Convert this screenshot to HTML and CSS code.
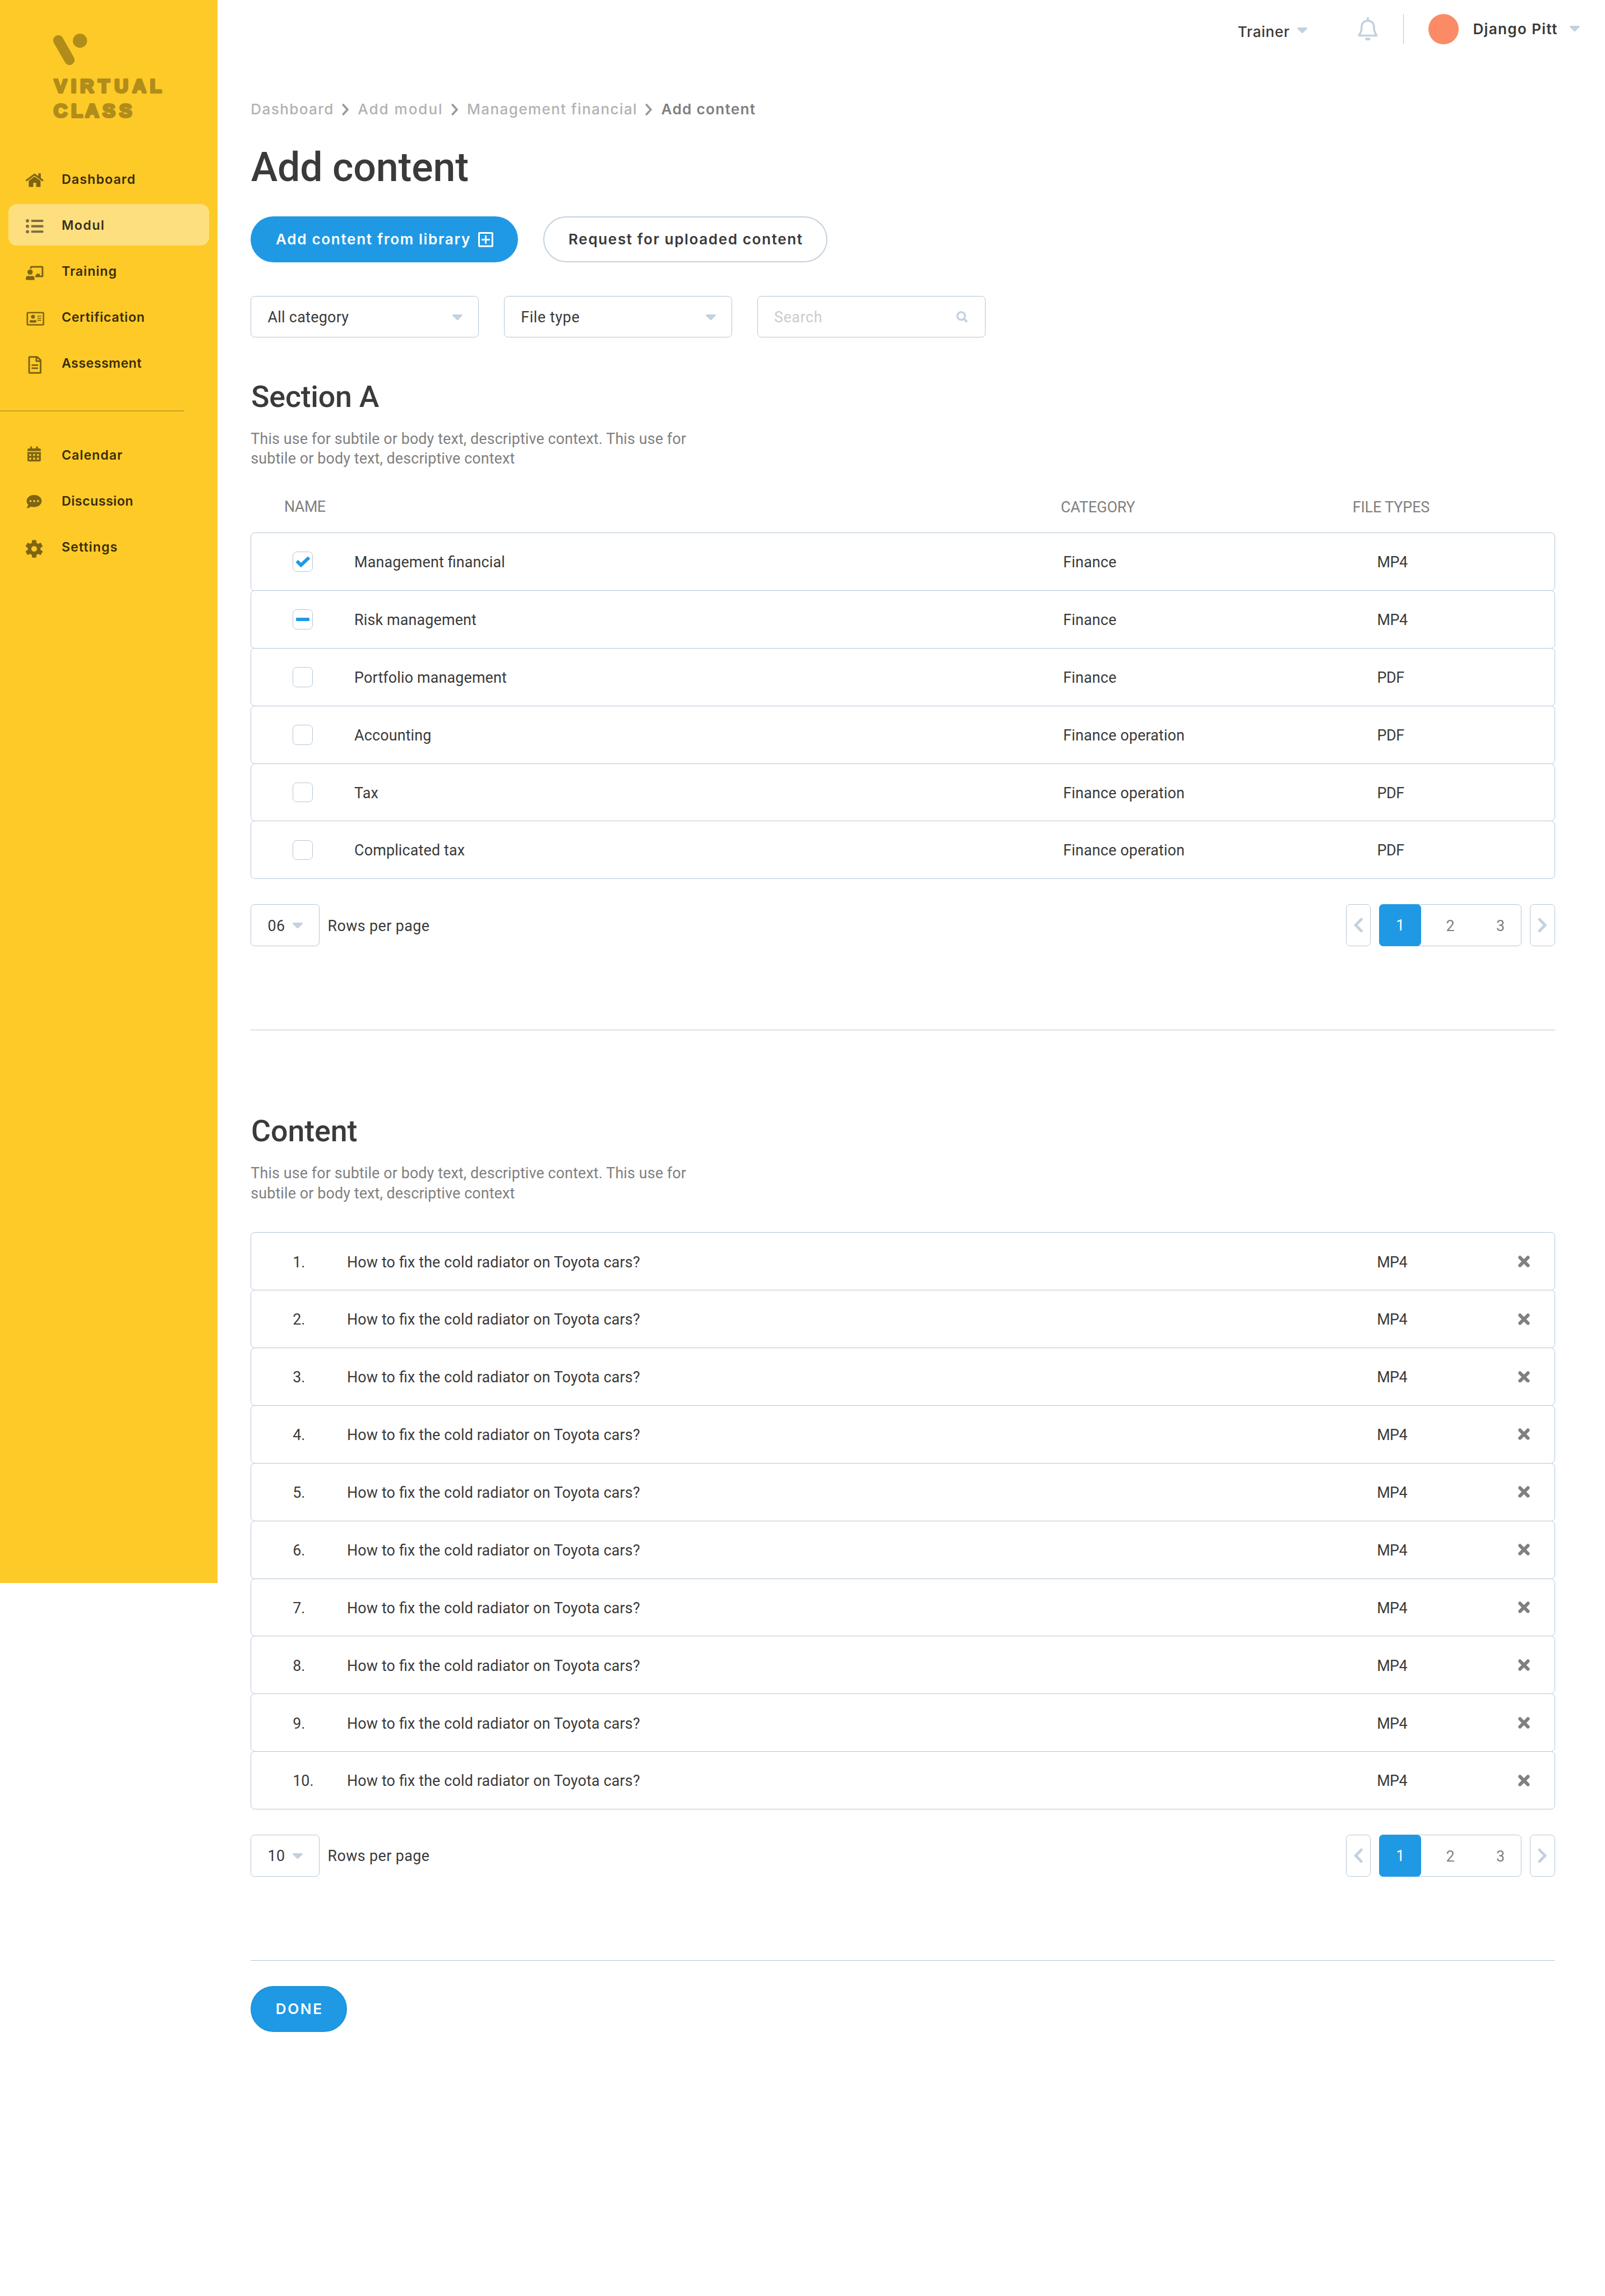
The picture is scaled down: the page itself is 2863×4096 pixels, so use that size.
FILE: index.html
```html
<!DOCTYPE html>
<html lang="en">
<head>
<meta charset="utf-8">
<title>Add content – Virtual Class</title>
<link rel="stylesheet" href="styles.css">
</head>
<body>
<svg class="sprite" aria-hidden="true">
  <symbol id="caret" viewBox="0 0 24 14"><path d="M2 0H22C24 0 24.6 2 23.4 3.2L13.4 13.2Q12 14.6 10.6 13.2L.6 3.2C-.6 2 0 0 2 0Z" fill="currentColor"/></symbol>
  <symbol id="chev-right" viewBox="0 0 22 36"><path d="M4.2 4.2L17.6 18L4.2 31.8" fill="none" stroke="currentColor" stroke-width="6.6" stroke-linecap="round"/></symbol>
  <symbol id="chev-left" viewBox="0 0 22 36"><path d="M17.8 4.2L4.4 18L17.8 31.8" fill="none" stroke="currentColor" stroke-width="6.6" stroke-linecap="round"/></symbol>
  <symbol id="crumb-sep" viewBox="0 0 17 28"><path d="M3 2.6L13.4 14L3 25.4" fill="none" stroke="currentColor" stroke-width="4.8" stroke-linecap="round"/></symbol>
  <symbol id="cross" viewBox="0 0 28 28"><path d="M4.4 4.4L23.6 23.6M23.6 4.4L4.4 23.6" fill="none" stroke="currentColor" stroke-width="8" stroke-linecap="round"/></symbol>
</svg>

<div class="app">
  <aside class="sidebar">
    <svg class="logo" viewBox="120 76 280 214">
      <path d="M140 96L167 143" stroke="currentColor" stroke-width="24.5" stroke-linecap="round"/>
      <circle cx="192" cy="97" r="17" fill="currentColor"/>
      <text class="wordmark" y="221.500" x="130.500 170.500 192.500 235.500 274.500 317.500 359.500">VIRTUAL</text>
      <text class="wordmark" y="280" x="129 171 204.500 246 286">CLASS</text>
    </svg>
    <nav class="nav">
      <a class="nav-item dashboard"><svg viewBox="0 0 44 44"><path d="M1.8 25.2L21 11L40.2 25.2" fill="none" stroke="currentColor" stroke-width="4" stroke-linejoin="round" stroke-linecap="round"/><path d="M30 10q0-1.5 1.5-1.5h3q1.5 0 1.5 1.5V21L30 16.5Z"/><path d="M7 26L21 16L35.3 26V39.5q0 1.4-1.4 1.4H26q-1.2 0-1.2-1.2V32q0-1-1-1H19q-1 0-1 1v7.7q0 1.2-1.2 1.2H8.4Q7 40.900 7 39.500Z"/></svg><span>Dashboard</span></a>
      <a class="nav-item modul active"><svg viewBox="0 0 44 44"><circle cx="4" cy="12" r="3.9"/><circle cx="4" cy="25" r="3.9"/><circle cx="4" cy="38" r="3.9"/><rect x="13" y="9.300" width="29" height="5.400" rx="1.200"/><rect x="13" y="22.300" width="29" height="5.400" rx="1.200"/><rect x="13" y="35.300" width="29" height="5.400" rx="1.200"/></svg><span>Modul</span></a>
      <a class="nav-item training"><svg viewBox="0 0 44 44"><path d="M12.300 16.500V13.500Q12.300 12 13.800 12H38.500Q40 12 40 13.500V33.500Q40 35 38.500 35H22.500" fill="none" stroke="currentColor" stroke-width="4"/><rect x="25" y="28.800" width="8.700" height="5"/><circle cx="10.300" cy="24.600" r="6.300"/><path d="M6 33.500Q10.500 35.500 15 33.500Q21 34 21 40.500V41.500Q21 43.600 19 43.600H2Q0 43.600 0 41.500V40.500Q0 34 6 33.500Z"/></svg><span>Training</span></a>
      <a class="nav-item certification"><svg viewBox="0 0 44 44"><rect x="3.700" y="11.700" width="38.600" height="29.200" rx="2" fill="none" stroke="currentColor" stroke-width="3.500"/><circle cx="17.200" cy="21.600" r="4.700"/><path d="M12.500 29.200Q17 31 22 29.200Q25.500 30 25.500 34Q25.500 35.500 24 35.500H10.500Q9 35.500 9 34Q9 30 12.500 29.200Z"/><path d="M27.500 20.200H37M27.500 25.100H37M27.500 30H37" stroke="currentColor" stroke-width="2.100"/></svg><span>Certification</span></a>
      <a class="nav-item assessment"><svg viewBox="0 0 44 44"><path d="M9 7.800H27.500L35.500 15.200V45Q35.500 46 34.500 46H9Q8 46 8 45V8.800Q8 7.800 9 7.800ZM25.300 8V17.700H35.500" fill="none" stroke="currentColor" stroke-width="4" stroke-linejoin="round"/><path d="M14 27.200H29.500M14 34.600H29.500" stroke="currentColor" stroke-width="3.700"/></svg><span>Assessment</span></a>
      <hr class="nav-rule">
      <a class="nav-item calendar"><svg viewBox="0 0 44 44"><path d="M4 13V9.800Q4 6.800 7 6.800H10.700V3Q10.700 2 11.700 2H14Q15 2 15 3V6.800H24.500V3Q24.500 2 25.500 2H28Q29 2 29 3V6.800H33Q36 6.800 36 9.800V13Z"/><path fill-rule="evenodd" d="M4 15.500H36V35Q36 38 33 38H7Q4 38 4 35ZM8.300 20V24.500H12.800V20ZM17.700 20V24.500H22.200V20ZM26.800 20V24.500H31.300V20ZM8.300 29V33.500H12.800V29ZM17.700 29V33.500H22.200V29ZM26.800 29V33.500H31.300V29Z"/></svg><span>Calendar</span></a>
      <a class="nav-item discussion"><svg viewBox="0 0 44 44"><path fill-rule="evenodd" d="M20 8C30 8 38 14.500 38 22.500S30 37 20 37Q16 37 12.500 35.800Q8 39.600 2.600 39.600Q1.500 39.600 2.300 38.600Q5 35.500 5.800 32Q2 28 2 22.500C2 14.500 10 8 20 8ZM11.200 20.200a2.400 2.400 0 1 0 .01 0ZM20.200 20.200a2.400 2.400 0 1 0 .01 0ZM29.200 20.200a2.400 2.400 0 1 0 .01 0Z"/></svg><span>Discussion</span></a>
      <a class="nav-item settings"><svg viewBox="0 0 44 44"><g transform="translate(20 27)"><circle r="11" fill="none" stroke="currentColor" stroke-width="8.600"/><path id="tooth" d="M-5.600 -13L-5.200 -20Q-5 -21 -4 -21H4Q5 -21 5.200 -20L5.600 -13Z"/><use href="#tooth" transform="rotate(60)"/><use href="#tooth" transform="rotate(120)"/><use href="#tooth" transform="rotate(180)"/><use href="#tooth" transform="rotate(240)"/><use href="#tooth" transform="rotate(300)"/></g></svg><span>Settings</span></a>
    </nav>
  </aside>

  <div class="page">
    <header class="topbar">
      <span class="role">Trainer</span>
      <svg class="caret role-caret"><use href="#caret"/></svg>
      <svg class="bell" viewBox="0 0 48 56"><path d="M2.600 43C7.500 37 9.200 32 9.200 24C9.200 13 16 8 24 8S38.800 13 38.800 24C38.800 32 40.500 37 45.400 43Q45.400 43.500 44.500 43.500H3.500Q2.600 43.500 2.600 43Z" fill="none" stroke="currentColor" stroke-width="4.800" stroke-linejoin="round"/><path d="M24 2.500V7" stroke="currentColor" stroke-width="5.500" stroke-linecap="round"/><path d="M17.300 49H30.700Q30.500 56 24 56T17.300 49Z" fill="currentColor"/></svg>
      <span class="bar"></span>
      <span class="avatar"></span>
      <span class="user">Django Pitt</span>
      <svg class="caret user-caret"><use href="#caret"/></svg>
    </header>

    <main class="main">
      <div class="crumbs">
        <span>Dashboard</span><svg><use href="#crumb-sep"/></svg>
        <span class="crumb-modul">Add modul</span><svg><use href="#crumb-sep"/></svg>
        <span>Management financial</span><svg><use href="#crumb-sep"/></svg>
        <span class="here">Add content</span>
      </div>
      <h1>Add content</h1>

      <div class="actions">
        <button class="btn primary">Add content from library<svg viewBox="0 0 36 36"><path d="M3.500 2H32.500Q34 2 34 3.500V32.500Q34 34 32.500 34H3.500Q2 34 2 32.500V3.500Q2 2 3.500 2ZM18 8V28M8 18H28" fill="none" stroke="currentColor" stroke-width="4"/></svg></button>
        <button class="btn outline">Request for uploaded content</button>
      </div>

      <div class="filters">
        <div class="field"><span class="cat">All category</span><svg class="caret"><use href="#caret"/></svg></div>
        <div class="field"><span>File type</span><svg class="caret"><use href="#caret"/></svg></div>
        <div class="field search"><span>Search</span><svg class="lens" viewBox="0 0 28 28"><circle cx="11.500" cy="11.500" r="9.200" fill="none" stroke="currentColor" stroke-width="4.600"/><path d="M18.500 19L25.500 26" stroke="currentColor" stroke-width="5"/></svg></div>
      </div>

      <section>
        <h2>Section A</h2>
        <p class="desc">This use for subtile or body text, descriptive context. This use for<br>subtile or body text, descriptive context</p>
        <div class="thead"><span class="h-name">NAME</span><span>CATEGORY</span><span>FILE TYPES</span></div>
        <div class="table">
          <div class="row files"><i class="box"><svg class="tick" viewBox="0 0 36 28"><path d="M3.300 12L13.300 21.800L32.500 3.500" fill="none" stroke="currentColor" stroke-width="8"/></svg></i><span>Management financial</span><span>Finance</span><span class="type">MP4</span></div>
          <div class="row files"><i class="box"><b class="dash"></b></i><span>Risk management</span><span>Finance</span><span class="type">MP4</span></div>
          <div class="row files"><i class="box"></i><span>Portfolio management</span><span>Finance</span><span class="type">PDF</span></div>
          <div class="row files"><i class="box"></i><span>Accounting</span><span>Finance operation</span><span class="type">PDF</span></div>
          <div class="row files"><i class="box"></i><span>Tax</span><span>Finance operation</span><span class="type">PDF</span></div>
          <div class="row files"><i class="box"></i><span>Complicated tax</span><span>Finance operation</span><span class="type">PDF</span></div>
        </div>
        <div class="pager">
          <div class="size"><span>06</span><svg class="caret"><use href="#caret"/></svg></div>
          <span class="size-label">Rows per page</span>
          <div class="step"><svg><use href="#chev-left"/></svg></div>
          <div class="pages"><b>1</b><span>2</span><span>3</span></div>
          <div class="step"><svg><use href="#chev-right"/></svg></div>
        </div>
      </section>

      <hr class="rule">

      <section>
        <h2 class="second">Content</h2>
        <p class="desc">This use for subtile or body text, descriptive context. This use for<br>subtile or body text, descriptive context</p>
        <div class="table list">
          <div class="row lessons"><span>1.</span><span>How to fix the cold radiator on Toyota cars?</span><span class="type">MP4</span><svg><use href="#cross"/></svg></div>
          <div class="row lessons"><span>2.</span><span>How to fix the cold radiator on Toyota cars?</span><span class="type">MP4</span><svg><use href="#cross"/></svg></div>
          <div class="row lessons"><span>3.</span><span>How to fix the cold radiator on Toyota cars?</span><span class="type">MP4</span><svg><use href="#cross"/></svg></div>
          <div class="row lessons"><span>4.</span><span>How to fix the cold radiator on Toyota cars?</span><span class="type">MP4</span><svg><use href="#cross"/></svg></div>
          <div class="row lessons"><span>5.</span><span>How to fix the cold radiator on Toyota cars?</span><span class="type">MP4</span><svg><use href="#cross"/></svg></div>
          <div class="row lessons"><span>6.</span><span>How to fix the cold radiator on Toyota cars?</span><span class="type">MP4</span><svg><use href="#cross"/></svg></div>
          <div class="row lessons"><span>7.</span><span>How to fix the cold radiator on Toyota cars?</span><span class="type">MP4</span><svg><use href="#cross"/></svg></div>
          <div class="row lessons"><span>8.</span><span>How to fix the cold radiator on Toyota cars?</span><span class="type">MP4</span><svg><use href="#cross"/></svg></div>
          <div class="row lessons"><span>9.</span><span>How to fix the cold radiator on Toyota cars?</span><span class="type">MP4</span><svg><use href="#cross"/></svg></div>
          <div class="row lessons"><span>10.</span><span>How to fix the cold radiator on Toyota cars?</span><span class="type">MP4</span><svg><use href="#cross"/></svg></div>
        </div>
        <div class="pager">
          <div class="size"><span>10</span><svg class="caret"><use href="#caret"/></svg></div>
          <span class="size-label">Rows per page</span>
          <div class="step"><svg><use href="#chev-left"/></svg></div>
          <div class="pages"><b>1</b><span>2</span><span>3</span></div>
          <div class="step"><svg><use href="#chev-right"/></svg></div>
        </div>
      </section>

      <hr class="rule">
      <button class="btn primary done">DONE</button>
    </main>
  </div>
</div>
</body>
</html>
```
FILE: styles.css
```css
/* 1rem is ten design units */
html { font-size: 7.4557px; }
:root { --line: #b4c6d7; --mist: #c3d1df; --blue: #2099e5; }
* { box-sizing: border-box; margin: 0; padding: 0; }
body {
  width: 384rem;
  height: 549.4rem;
  overflow: hidden;
  background: #fff;
  color: #3a3a3a;
  font: 400 3.6rem/4.8rem Roboto, "Liberation Sans", sans-serif;
  font-feature-settings: "liga" 1;
}
svg { display: block; flex: none; }
span { white-space: nowrap; }
.sprite { position: absolute; width: 0; height: 0; }
.app { display: flex; align-items: flex-start; }

/* Sidebar */
.sidebar { flex: none; width: 52rem; height: 378.8rem; background: #feca28; }
.logo { width: 28rem; height: 21.4rem; margin: 7.6rem 0 0 12rem; color: #b08d1a; }
.wordmark {
  font: 700 45.5px "Liberation Sans", sans-serif;
  fill: currentColor;
  stroke: currentColor;
  stroke-width: 5.4px;
  stroke-linejoin: round;
}
.nav { display: flex; flex-direction: column; gap: 1rem; margin-top: 8.8rem; }
.nav-item {
  display: flex;
  align-items: center;
  height: 10rem;
  margin: 0 2rem;
  padding-left: 4.2rem;
  border-radius: 2rem;
  color: #000;
  font: 600 3.1rem/4rem Inter, sans-serif;
}
.nav-item svg { width: 4.4rem; height: 4.4rem; margin-right: 4.15rem; overflow: visible; fill: currentColor; opacity: .5; }
.nav-item span { opacity: .78; padding-top: .5rem; }
.active { background: #fedf7f; }
.dashboard { letter-spacing: .05em; }
.modul { letter-spacing: .064em; }
.training { letter-spacing: .043em; }
.certification { letter-spacing: .032em; }
.assessment { letter-spacing: .022em; }
.calendar { letter-spacing: .045em; }
.discussion { letter-spacing: .023em; }
.settings { letter-spacing: .047em; }
.nav-rule { width: 44rem; height: .2rem; margin: 5.4rem 0 4.4rem; border: 0; background: #cba220; }

/* Top bar */
.page { flex: 1; }
.topbar {
  display: flex;
  align-items: center;
  justify-content: flex-end;
  height: 14rem;
  padding-right: 6rem;
  color: var(--mist);
  font-family: Inter, sans-serif;
  font-size: 3.5rem;
}
.caret { width: 2.4rem; height: 1.4rem; color: var(--mist); }
.role { padding-top: 1.3rem; margin-right: 1.8rem; color: #3a3a3a; font-weight: 500; letter-spacing: .028em; }
.role-caret { margin: .6rem 12rem 0 0; }
.bell { width: 4.8rem; height: 5.6rem; margin: -.2rem 6.1rem 0 0; }
.bar { width: .2rem; height: 7.2rem; margin-right: 5.9rem; background: var(--line); }
.avatar { width: 7.2rem; height: 7.2rem; margin-right: 3.4rem; border-radius: 50%; background: #fb8b67; }
.user { margin-right: 2.9rem; color: #3a3a3a; font-weight: 600; letter-spacing: .0515em; }
.user-caret { margin-top: -.2rem; }

/* Heading */
.main { width: 320rem; padding: 9.9rem 0 0 8rem; }
.crumbs { display: flex; align-items: center; gap: 1.9rem; height: 4.4rem; color: #b2b2b2; font: 500 3.5rem/4.4rem Inter, sans-serif; letter-spacing: .053em; }
.crumbs span { padding-top: .3rem; }
.crumbs svg { width: 1.7rem; height: 2.8rem; margin: .2rem .2rem 0 0; color: #999; }
.crumb-modul { letter-spacing: .0748em; }
.here { color: #7f7f7f; font-weight: 600; letter-spacing: .051em; }
h1 { margin: 6.2rem 0 6.1rem .05rem; font: 500 9.6rem/11.2rem Roboto, sans-serif; letter-spacing: -.0017em; }
.actions { display: flex; gap: 6rem; }
.btn {
  display: flex;
  align-items: center;
  justify-content: flex-start;
  height: 11rem;
  padding-top: .2rem;
  border: 0;
  border-radius: 5.5rem;
  background: none;
  color: #3a3a3a;
  font: 600 3.5rem/4.4rem Inter, sans-serif;
  letter-spacing: .0618em;
  white-space: nowrap;
}
.primary { width: 64rem; padding-left: 6rem; background: var(--blue); color: #fff; letter-spacing: .064em; }
.btn svg { width: 3.6rem; height: 3.6rem; margin-left: 1.8rem; }
.outline { width: 68rem; padding-left: 5.75rem; border: .4rem solid var(--mist); }
.done { width: 23rem; padding-left: 5.7rem; border: .4rem solid #1f93da; letter-spacing: .0976em; }

/* Filters */
.filters { display: flex; gap: 6rem; margin-top: 8rem; }
.field {
  display: flex;
  align-items: center;
  justify-content: space-between;
  width: 54.6rem;
  height: 10rem;
  padding: .5rem 3.8rem 0 3.9rem;
  border: .2rem solid var(--line);
  border-radius: 1rem;
  letter-spacing: .023em;
}
.field .caret { margin-top: -.3rem; }
.cat { letter-spacing: .0114em; }
.search { color: #ccc; }
.lens { width: 2.8rem; height: 2.8rem; margin: -.5rem .2rem 0 0; color: var(--mist); }

/* Sections */
h2 { margin: 9.95rem 0 3.4rem .1rem; font: 500 7.2rem/8.4rem Roboto, sans-serif; letter-spacing: -.004em; }
.second { margin-top: 19.95rem; letter-spacing: -.001em; }
.desc { padding-top: .15rem; color: #808080; letter-spacing: .005em; }
.thead { display: grid; grid-template-columns: 185.8rem 69.8rem auto; align-items: center; height: 15.15rem; padding: 3.3rem 0 0 8rem; color: #808080; letter-spacing: -.003em; }
.h-name { margin-top: -.3rem; letter-spacing: -.0177em; }
.list { margin-top: 6.75rem; }
.row { display: grid; align-items: center; height: calc(13.8rem + 1px); padding-left: 9.9rem; border: 1px solid var(--line); border-radius: 1rem; }
.row + .row { margin-top: -1px; }
.row span { padding-top: .5rem; letter-spacing: .0065em; }
.row .type { letter-spacing: -.0158em; }
.files { grid-template-columns: 14.75rem 169.6rem 75.1rem auto; }
.lessons { grid-template-columns: 13rem 246.4rem 33.8rem 2.8rem; }
.lessons span { padding-top: .6rem; letter-spacing: .006em; }
.lessons svg { width: 2.8rem; height: 2.8rem; color: #808080; }
.box { display: flex; align-items: center; justify-content: center; width: 4.8rem; height: 4.8rem; border: 1px solid var(--line); border-radius: 1rem; }
.tick { width: 3.6rem; height: 2.8rem; color: var(--blue); }
.dash { width: 3.2rem; height: .8rem; border-radius: .2rem; background: var(--blue); }

/* Pager */
.pager { display: flex; align-items: center; height: 10rem; margin-top: 6.05rem; }
.size { display: flex; align-items: center; width: 16.4rem; height: 10rem; padding: .5rem 0 0 3.9rem; border: 1px solid var(--line); border-radius: 1rem; letter-spacing: .021em; }
.size .caret { margin: -.3rem 0 0 1.8rem; }
.size-label { margin: .5rem auto 0 2rem; letter-spacing: .0157em; }
.step { display: flex; align-items: center; justify-content: center; width: 6rem; height: 10rem; border: 1px solid var(--line); border-radius: 1rem; color: var(--mist); }
.step svg { width: 2.2rem; height: 3.6rem; }
.pages { display: flex; width: 34rem; height: 10rem; margin: 0 2rem; border: 1px solid var(--line); border-radius: 1rem; line-height: 10.2rem; text-align: center; color: #808080; }
.pages b { flex: none; width: 10rem; height: 10rem; margin: -1px 1rem 0 -1px; border-radius: 1rem; background: var(--blue); color: #fff; font-weight: 400; }
.pages span { flex: none; width: 12rem; }
.rule { width: 312rem; height: .2rem; margin-top: 20rem; border: 0; border-top: 1px solid var(--line); }
.done { margin-top: 6rem; }
```
